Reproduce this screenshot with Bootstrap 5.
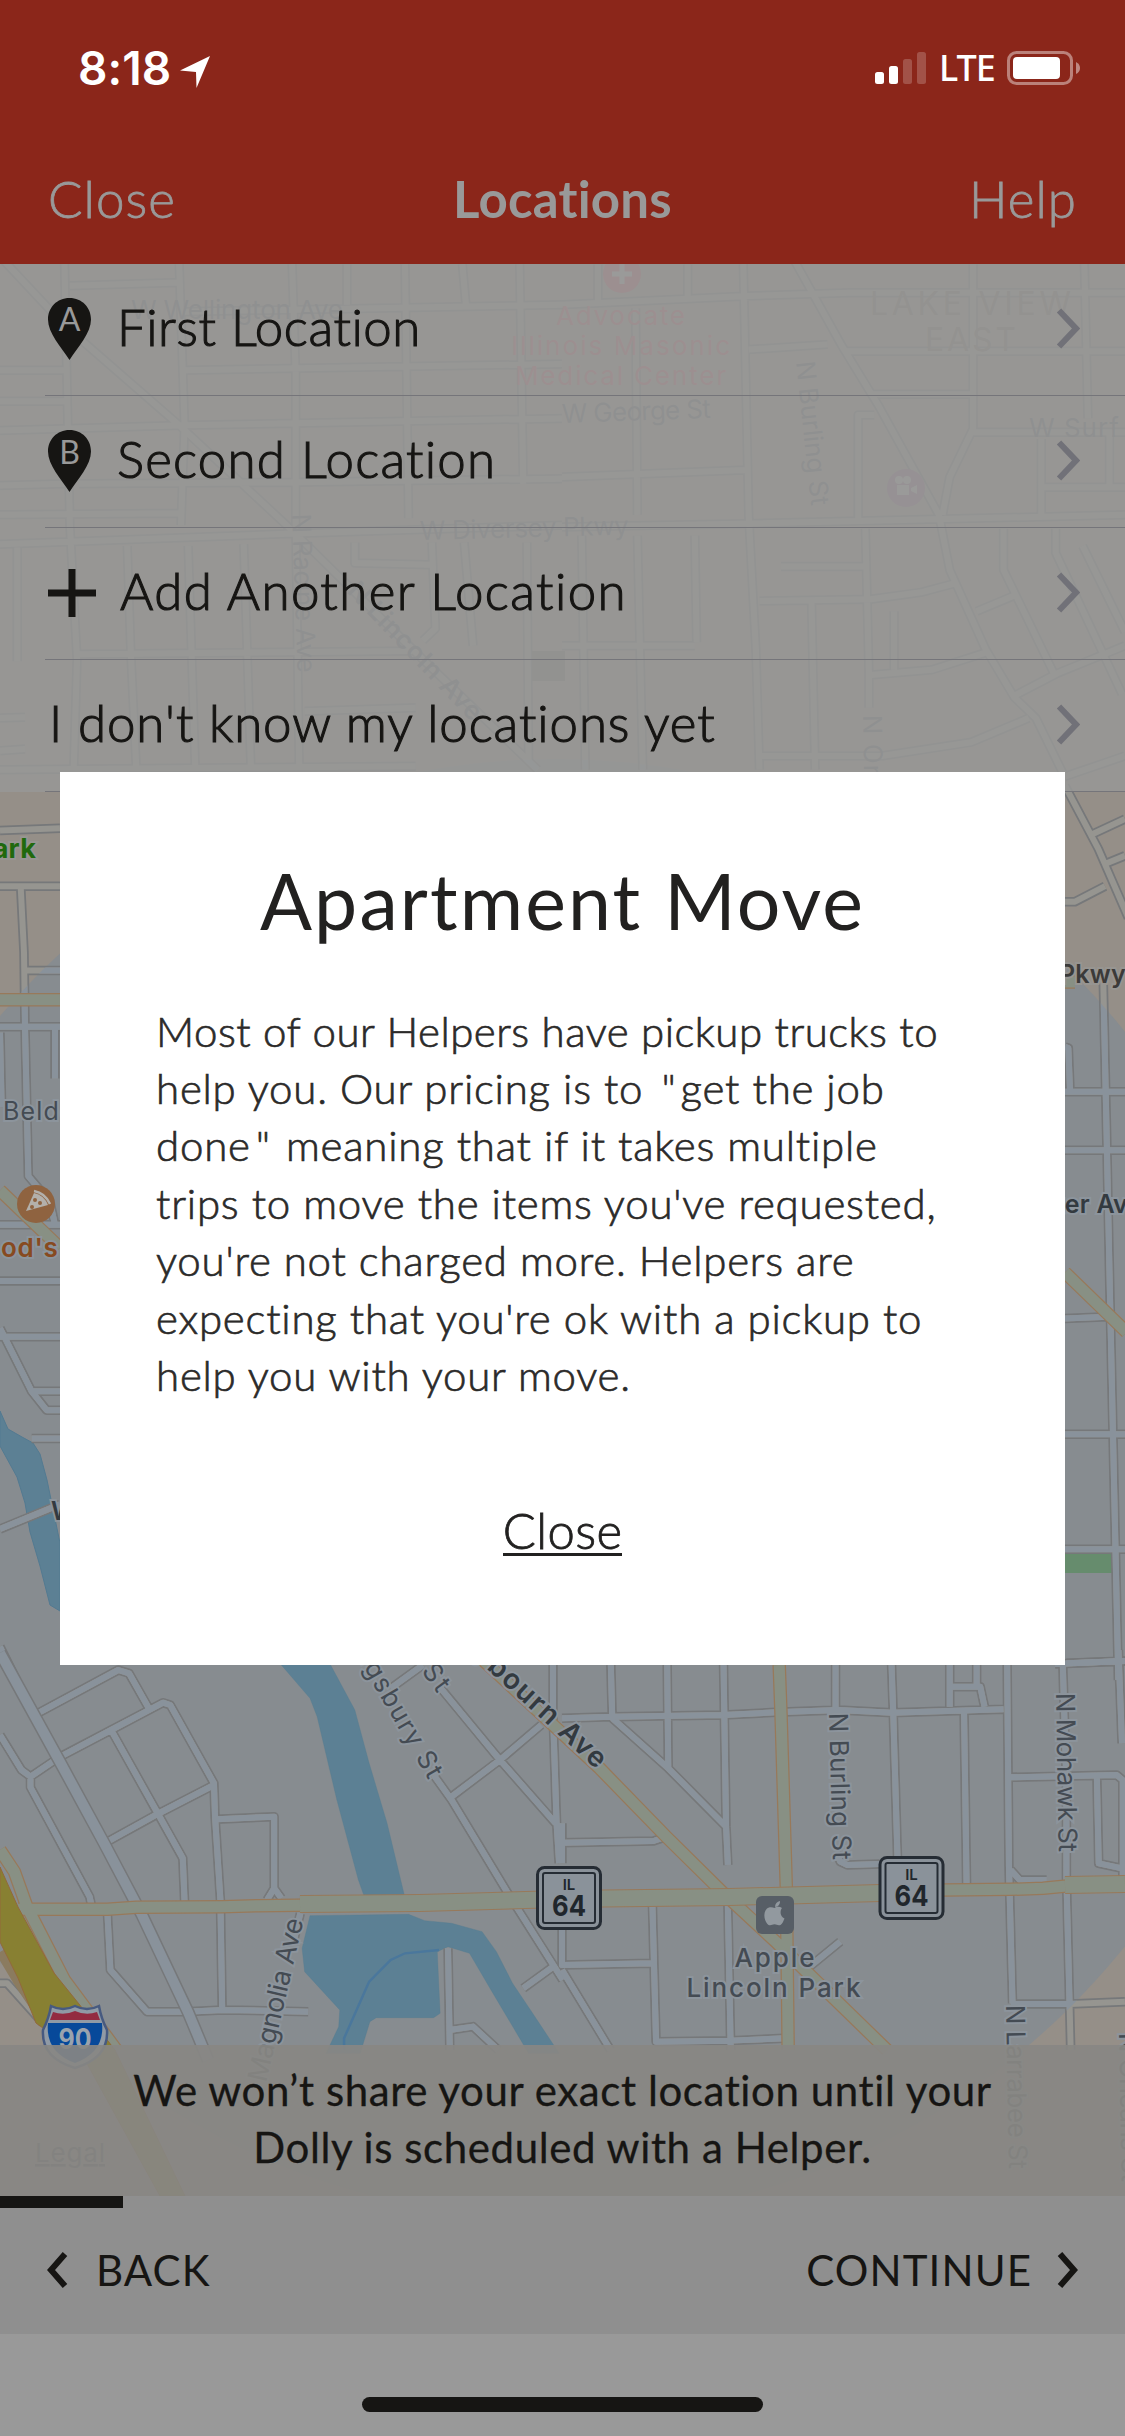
<!DOCTYPE html>
<html lang="en">
<head>
<meta charset="utf-8">
<meta name="viewport" content="width=device-width, initial-scale=1">
<title>Locations</title>
<link href="https://cdn.jsdelivr.net/npm/bootstrap@5.3.0/dist/css/bootstrap.min.css" rel="stylesheet">
<style>
body{margin:0;background:#999;font-family:Lato,"Open Sans",sans-serif;color:#161513;font-variant-ligatures:none}
.phone{width:1125px;height:2436px}
.map-canvas{left:0;top:264px;width:1125px;height:1932px;z-index:0}
.layer{z-index:1}
.topbar{height:264px;background:#8b261a;color:#999}
.status{height:136px;padding:0 44px 0 78px;font-family:Inter,sans-serif;color:#fff}
.clock{font-size:46px;font-weight:600;line-height:1;letter-spacing:.1px}
.carrier{font-family:"Noto Sans",sans-serif;font-size:36px;font-weight:500;line-height:1;letter-spacing:-.9px}
.battery{width:78px}
.navrow{height:128px;padding:0 48px 2px;font-size:51px;line-height:1.2}
.navrow a{color:#999;font-weight:300;text-decoration:none;letter-spacing:1.1px;-webkit-text-stroke:.8px #999}
.navrow h1{font-size:51px;font-weight:700;line-height:1.2;letter-spacing:.2px}
.side{width:200px}
.places{background:rgba(152,152,150,.85)}
.place{height:132px;padding:0 45px 5px 0;margin-left:45px;border-bottom:1px solid #75757a;font-size:51px;line-height:1.2;font-weight:300;letter-spacing:1.2px;-webkit-text-stroke:1.1px #161513}
.place .go{width:24px;height:41px;margin-top:3px}
.tight{letter-spacing:.55px}
.loose{letter-spacing:1.4px;padding-left:3px}
.plain{letter-spacing:.9px;padding-left:4px}
.pin-cell{width:72px;padding-left:3px}
.pin-cell svg{margin-top:4px}
.note{height:151px;padding-bottom:4px;background:rgba(136,135,131,.92);font-size:42px;line-height:57px;letter-spacing:.6px;-webkit-text-stroke:.3px #161513}
.steps{height:138px;background:#8f8f8f;font-size:42px;line-height:1;letter-spacing:1.1px}
.steps .bar{height:12px;width:123px;background:#161513}
.steps .nav-btns{height:126px;padding:0 47px 3px}
.fwd{margin-right:25px}
.homebar{height:102px;background:#999}
.homebar i{width:401px;height:15px;border-radius:8px;background:#161513;margin-top:63px}
.sheet{width:1005px;height:893px;background:#fff;border-radius:0;border:0;color:#222120}
.sheet h2{font-size:77px;line-height:92px;font-weight:400;letter-spacing:2.15px;margin:82px 0 0}
.sheet p{margin:57px 0 0 96px;font-size:42px;line-height:57.4px;font-weight:300;letter-spacing:.78px;-webkit-text-stroke:.7px #2b2a29;color:#2b2a29}
.sheet .first{letter-spacing:.5px}
.qo{margin-left:6px;margin-right:4px}
.qc{margin-left:5px;margin-right:3px}
.sheet a{color:#222120;font-size:49px;line-height:46px;font-weight:300;letter-spacing:.4px;-webkit-text-stroke:.8px #222120;border-bottom:3px solid #222120;text-decoration:none;margin-top:103px}
.roadset path{fill:none;vector-effect:non-scaling-stroke;stroke-linejoin:round}
.lbl{fill:#444b53;font-family:Inter,sans-serif;font-size:26px;letter-spacing:1px;paint-order:stroke;stroke:#8c949c;stroke-width:4px}
.veiled .lbl{fill:#5f656f;stroke:none}
.veiled .care .lbl{fill:#b3606a}
.veiled .area .lbl{fill:#77716a;font-size:32px}
</style>
<script src="https://cdn.jsdelivr.net/npm/bootstrap@5.3.0/dist/js/bootstrap.bundle.min.js"></script>
</head>
<body>
<div class="phone position-relative overflow-hidden d-flex flex-column">

<svg class="map-canvas position-absolute" viewBox="0 264 1125 1932" aria-hidden="true">
<defs>
<clipPath id="zone"><circle cx="556" cy="1489" r="730"/></clipPath>
<!-- local streets, grouped by map tile -->
<g id="streets" class="roadset">
 <g transform="matrix(.3584 0 0 .3444 0 260)">
  <path d="M180 12L195 770L215 1160L205 1500M0 -10L180 190L500 480L820 790L1180 1160L1500 1480M500 12L515 480L505 770M815 12L825 330V760L835 1480M968 12V130M1130 12L1140 750M1290 12L1300 130M1450 12L1460 650M195 75L500 65M515 150L1568 130M0 320H180M515 320L1568 302M0 410H180M0 495L515 480L1568 460M0 655L180 650M220 650L830 645L1568 635M0 740L500 735M0 825L800 795L1568 770M48 835V1165M355 830L365 1140L380 1470M525 830L545 1480M680 825L700 1470M220 1145L1150 1135M850 1310L1160 1300M990 820V880L1200 885M1205 820L1215 1070L1180 1105M1295 820L1320 1120M1470 820L1475 1460M0 1330L70 1328M0 1425L70 1420M0 1480L1160 1470"/>
 </g>
 <g transform="matrix(.359 0 0 .3444 562 260)">
  <path d="M100 12V120M350 12V110M505 12L520 740L540 1130L550 1480M640 -12L780 250L880 420L1050 740L1080 900L1180 1130L1260 1270L1320 1330L1400 1500M0 130L500 105L800 95H1568M520 260L740 245M790 265H1568M860 390H1140M1145 12V490L1080 630L1060 740M1145 500H1568M825 750V450H870M205 140L210 740M0 630L510 610M0 775L540 765L1568 740M55 800L65 1480M210 800L225 1480M370 800L375 1110M0 1120H370M610 890H840M845 780L855 1200V1300M550 990L860 985L1000 965L1090 940M860 1205L1030 1190L1180 1140M695 990L705 1480M925 1020V1190M1230 780V900L1370 1200M1375 780V850L1560 1260M1155 1020L1270 970M1260 1265L1380 1200L1568 1120M550 1440H890L1140 1400L1300 1330M1335 520V740M1455 12L1465 460M1525 500V660M1340 660H1568M1450 830L1568 1080M1400 1500L1568 1440"/>
 </g>
 <g transform="matrix(.3333 0 0 .574 0 780)">
  <path d="M0 88L180 84M0 185H180M62 185L72 300L75 430L85 690L150 735L165 775M75 332H180M0 430H180M165 430V520M0 440L5 570M0 775H180M0 873H180M0 970H180M0 955L95 1065L140 1098H180M95 1065H180M95 1147H180M0 1305L180 1262M0 1510L50 1568"/>
 </g>
 <g transform="matrix(.3333 0 0 .574 1055 780)">
  <path d="M30 10L130 120L220 240M110 95L210 68M155 145L210 132M30 212H60L150 185M145 355L155 620L165 900L190 1568M30 543H210M30 645H210M30 938L160 935M30 1140H210M30 1340H210M0 1540L210 1535M30 465L40 467L45 540"/>
 </g>
 <g transform="matrix(.3584 0 0 .3333 0 1650)">
  <path d="M0 10L165 325L290 580L395 790L525 1085L572 1200M105 190L330 60L360 70L418 180M85 380L165 322L310 240L455 158L475 165L597 400L600 500L615 750L620 1080M310 240L440 490L510 625L515 755M300 575L440 492L597 405M0 255L60 360L85 380V412L250 740L255 765M605 508L765 500V715L745 750M765 715L785 745M300 795L308 960L410 1085H520L620 1080L860 1085M1090 115L1180 45M1230 115L1395 330L1550 520M1510 225L1395 330L1260 440M1210 375L1260 450L1420 735L1570 990M1460 1015L1550 945M1543 45V190L1553 520L1560 640M1250 895L1255 1200M1255 1140L1320 1130L1390 1200M838 790L820 870M0 1000L20 1000L120 1120"/>
 </g>
 <g transform="matrix(.359 0 0 .3333 562 1650)">
  <path d="M136 45L140 205M293 45L296 355M450 45L457 530L462 645M762 45V180M918 45L923 200L935 640M1080 45V170M1155 45V110M1240 45L1245 650L1255 1060M1395 45L1405 400V680L1417 1200M1550 0L1560 280M0 205L140 200L450 195L595 187L770 180L920 188L1230 178M1080 110H1165L1177 170M140 205L296 355L457 530M0 578L255 573L290 560M1120 190L1127 705M1245 382L1545 375L1562 390V690M1490 385L1495 640L1560 655M1405 40L1568 33M1250 660L1275 690L1350 690M765 610L775 635L795 645L885 642M0 520V640M0 800V945L255 940M252 770L262 1175L470 1172L620 1165M462 765L470 1200M0 960L135 1200M690 950L775 875M1250 1062L1415 1062L1568 1055"/>
 </g>
</g>
<!-- main avenues -->
<g id="avenues" class="roadset">
 <g transform="matrix(.3333 0 0 .574 0 780)"><path d="M0 383H180M0 715L180 815"/></g>
 <g transform="matrix(.3333 0 0 .574 1055 780)"><path d="M30 858L215 962M30 352H60"/></g>
 <g transform="matrix(.3584 0 0 .3333 0 1650)"><path d="M50 778H300L380 772L620 770L720 767L1040 763L1570 750M0 600L40 665L75 770L180 990L325 1200"/></g>
 <g transform="matrix(.359 0 0 .3333 562 1650)"><path d="M605 45L610 190L625 720L630 1200M-220 30L0 250L105 355L290 560L450 730L600 880L905 1200M0 752L100 745L460 742L640 735L885 726L1065 720L1250 718L1340 715L1405 708L1568 703"/></g>
</g>
</defs>
<rect y="264" width="1125" height="1932" fill="#958f88"/>
<circle cx="556" cy="1489" r="730" fill="#878c90"/>
<rect x="1065" y="1553" width="47" height="20" fill="#668c6d"/>
<g fill="#5c8094" stroke="#537a91" stroke-width="1">
 <path d="M0 1411L8 1429L22 1437L33 1443L40 1454L47 1480L60 1543V1611L50 1605L40 1566L30 1532L25 1503L17 1477L0 1446Z"/>
 <g transform="matrix(.3584 0 0 .3333 0 1650)">
  <path d="M785 45L865 145L885 200L940 450L1000 690L1015 735H1128L1080 520L1030 340L990 180L930 60L915 30Z"/>
  <path d="M865 797L1140 793L1185 812L1260 820L1345 845L1385 905L1430 1000L1480 1080L1560 1210H1475L1370 1020L1310 910L1250 890L1220 905L1228 1090L1210 1103H1050L1032 1115L1005 1210H910L945 1130L948 1080L850 965L843 895Z"/>
  <path d="M1225 900L1130 910L1090 930L1030 995L960 1165V1200" fill="none" stroke="#4a779c" stroke-width="7"/>
 </g>
</g>
<use href="#streets" stroke="#76787a" stroke-width="9.500"/>
<use href="#streets" stroke="#969590" stroke-width="6"/>
<g clip-path="url(#zone)"><use href="#streets" stroke="#89929b" stroke-width="6"/></g>
<path d="M0 1653L60 1762L104 1843L142 1915L188 2012L208 2060" fill="none" stroke="#76787a" stroke-width="13"/>
<path d="M0 1653L60 1762L104 1843L142 1915L188 2012L208 2060" fill="none" stroke="#89929b" stroke-width="10"/>
<use href="#avenues" stroke="#98795a" stroke-width="13.500"/>
<use href="#avenues" stroke="#889084" stroke-width="11"/>
<path d="M300 1904L420 1903L562 1899L730 1897L880 1893M1065 1885L1125 1884" fill="none" stroke="#98795a" stroke-width="18"/>
<path d="M300 1904L420 1903L562 1899L730 1897L880 1893M1065 1885L1125 1884" fill="none" stroke="#889084" stroke-width="16"/>
<path d="M0 1952L18 1982L50 2030" fill="none" stroke="#8b7b5f" stroke-width="9"/>
<path d="M0 1867L18 1907L54 1973L79 2004L115 2050L185 2196H160L85 2060L54 2036L36 2023L18 1978L0 1942Z" fill="#888032" stroke="#93693a"/>

<g class="veiled">
 <text class="lbl" x="131" y="319" textLength="213">W Wellington Ave</text>
 <text class="lbl" x="562" y="423" textLength="150" transform="rotate(-2 562 423)">W George St</text>
 <text class="lbl" x="420" y="540" textLength="210" transform="rotate(-1.5 420 540)">W Diversey Pkwy</text>
 <text class="lbl" x="1029" y="437">W Surf St</text>
 <g class="care" text-anchor="middle">
  <text class="lbl" x="621" y="325" textLength="130">Advocate</text>
  <text class="lbl" x="621" y="355" textLength="220">Illinois Masonic</text>
  <text class="lbl" x="621" y="385" textLength="212">Medical Center</text>
 </g>
 <g class="area" text-anchor="middle">
  <text class="lbl" x="971" y="315" textLength="202">LAKE VIEW</text>
  <text class="lbl" x="971" y="351" textLength="92">EAST</text>
 </g>
 <text class="lbl" transform="translate(796 362) rotate(84)" textLength="146">N Burling St</text>
 <text class="lbl" transform="translate(292 514) rotate(88)" textLength="160">N Racine Ave</text>
 <text class="lbl" transform="translate(346 592) rotate(46)" textLength="182" font-weight="600">N Lincoln Ave</text>
 <text class="lbl" transform="translate(863 715) rotate(89)">N Orchard St</text>
 <circle cx="622" cy="274" r="19" fill="#b3606a"/><path d="M622 264V284M612 274H632" stroke="#aaa" stroke-width="5"/>
 <circle cx="906" cy="488" r="19" fill="#8a6a84"/><path d="M897 485h12v10h-12zM911 488l6-3v9l-6-3z" fill="#aaa"/><circle cx="899" cy="480" r="4" fill="#aaa"/><circle cx="907" cy="480" r="4" fill="#aaa"/>
 <rect x="532" y="651" width="33" height="30" fill="#74746e"/>
</g>
<g>
 <text class="lbl" x="36" y="858" text-anchor="end" style="fill:#20690d;stroke:#979591;font-weight:700;letter-spacing:.2px;font-size:27px">Park</text>
 <text class="lbl" x="3" y="1120" style="font-size:25px;letter-spacing:1.2px">Belden Ave</text>
 <text class="lbl" x="1" y="1257" style="fill:#874a20;font-weight:600;font-size:26px;letter-spacing:.7px">od's</text>
 <text class="lbl" x="51" y="1520" style="fill:#333a40;font-weight:600;font-size:25px">W</text>
 <text class="lbl" x="1059" y="983" style="fill:#3b3a39;stroke:#979591;font-weight:600;font-size:25px;letter-spacing:.2px">Pkwy</text>
 <text class="lbl" x="1056" y="1213" style="fill:#333a40;font-weight:600;font-size:25px;letter-spacing:.2px">ter Ave</text>
 <circle cx="36" cy="1204" r="19" fill="#8f6340"/>
 <path d="M26 1211L34 1193Q44 1195 48 1205Z" fill="#b3b0ab"/><path d="M34 1191Q45 1193 50 1204" fill="none" stroke="#b3b0ab" stroke-width="2.500"/>
 <g fill="#8f6340"><circle cx="35" cy="1200" r="2"/><circle cx="32" cy="1207" r="2"/><circle cx="40" cy="1203" r="2"/></g>

 <text class="lbl" transform="translate(351 1646) rotate(60)" textLength="156">ingsbury St</text>
 <text class="lbl" transform="translate(421 1671) rotate(54)" textLength="29">St</text>
 <text class="lbl" transform="translate(466 1650) rotate(42.500)" textLength="178" style="fill:#333a40;font-weight:600;font-size:28px">lybourn Ave</text>
 <text class="lbl" transform="translate(266 2083) rotate(-77)" textLength="168" style="font-size:27px">Magnolia Ave</text>
 <text class="lbl" transform="translate(829 1713) rotate(88.500)" textLength="148">N Burling St</text>
 <text class="lbl" transform="translate(1056 1693) rotate(89)" textLength="160">N Mohawk St</text>
 <text class="lbl" transform="translate(1006 2005) rotate(89)" textLength="165">N Larrabee St</text>
 <text class="lbl" transform="translate(1119 2033) rotate(89)" textLength="150">N Orleans St</text>
 <text class="lbl" x="775" y="1967" text-anchor="middle" textLength="81" style="font-weight:500">Apple</text>
 <text class="lbl" x="774" y="1997" text-anchor="middle" textLength="175" style="font-weight:500">Lincoln Park</text>
 <rect x="756" y="1896" width="38" height="38" rx="6" fill="#575e66"/>
 <path d="M782 1908c-3-2-6-1-7.500 0c-2-1-5-1.500-7.500 .5c-5 5-2 14 1.500 16.500c3 .8 3.500-.7 6-.7s3 1.500 6 .7c2-1.500 3-4 4-6.500c-5-2.500-4.500-8-2.500-10.500zM775 1907c0-3 2-5.500 5-6c.3 3-2 6-5 6z" fill="#92999f"/>
</g>
<!-- route shields -->
<g font-family="Inter, sans-serif" text-anchor="middle" fill="#20262c">
 <g><rect x="537.500" y="1867.500" width="63" height="61" rx="7" fill="#8a929a" stroke="#252c34" stroke-width="3"/><rect x="543" y="1873" width="52" height="50" rx="2" fill="none" stroke="#252c34" stroke-width="2"/><text x="569" y="1890" font-size="15" font-weight="600">IL</text><text x="569" y="1916" font-size="29" font-weight="700" textLength="34" lengthAdjust="spacingAndGlyphs">64</text></g>
 <g transform="translate(342.500 -10)"><rect x="537.500" y="1867.500" width="63" height="61" rx="7" fill="#8a929a" stroke="#252c34" stroke-width="3"/><rect x="543" y="1873" width="52" height="50" rx="2" fill="none" stroke="#252c34" stroke-width="2"/><text x="569" y="1890" font-size="15" font-weight="600">IL</text><text x="569" y="1916" font-size="29" font-weight="700" textLength="34" lengthAdjust="spacingAndGlyphs">64</text></g>
</g>
<g>
 <path d="M51 2006Q63 2012 75 2006Q87 2012 99 2006Q101 2018 107 2030Q109 2058 75 2068Q41 2058 43 2030Q49 2018 51 2006Z" fill="#909aa5" stroke="#475a80" stroke-width="2.500"/>
 <path d="M53 2012Q64 2016 75 2011Q86 2016 97 2012L100 2020H50Z" fill="#932b41"/>
 <path d="M48 2023H102Q105 2052 75 2063Q45 2052 48 2023Z" fill="#07499a"/>
 <text x="75" y="2049" text-anchor="middle" font-family="Inter, sans-serif" font-size="29" font-weight="700" textLength="33" lengthAdjust="spacingAndGlyphs" fill="#9aa3ad">90</text>
</g>
<text x="35" y="2162" font-family="Inter, sans-serif" font-size="26" textLength="70" fill="#4a5460" text-decoration="underline">Legal</text>
</svg>

<header class="topbar layer flex-shrink-0">
 <div class="status d-flex align-items-center justify-content-between">
  <div class="d-flex align-items-center gap-2">
   <span class="clock">8:18</span>
   <svg width="32" height="34" viewBox="0 0 32 34" class="mt-2"><path d="M31 1L17.500 33L17 17L1 15.500Z" fill="#fff"/></svg>
  </div>
  <div class="d-flex align-items-center">
   <svg width="52" height="34" viewBox="0 0 52 34"><g fill="#fff"><rect y="21" width="9" height="12" rx="2.500"/><rect x="14" y="15" width="9" height="18" rx="2.500"/><g opacity=".2"><rect x="28" y="8" width="9" height="25" rx="2.500"/><rect x="42" y="1" width="9" height="32" rx="2.500"/></g></g></svg>
   <span class="carrier ms-2 ps-1">LTE</span>
   <svg height="34" viewBox="0 0 74 34" class="battery ms-2 ps-1 flex-shrink-0"><rect x="1.500" y="1.500" width="63" height="31" rx="8" fill="none" stroke="#fff" stroke-opacity=".42" stroke-width="3"/><rect x="6" y="6" width="47" height="22" rx="4" fill="#fff"/><path d="M69 11Q73 13 73 17T69 23Z" fill="#fff" fill-opacity=".45"/></svg>
  </div>
 </div>
 <nav class="navrow d-flex align-items-center justify-content-between">
  <a class="side" href="#">Close</a>
  <h1 class="mb-0">Locations</h1>
  <a class="side text-end" href="#">Help</a>
 </nav>
</header>

<main class="places layer flex-shrink-0">
 <div class="place d-flex align-items-center">
  <span class="pin-cell"><svg class="d-block" width="43" height="62" viewBox="0 0 43 62"><path d="M21.500 0C9 0 0 9.500 0 21.500C0 35 13 49 21.500 62C30 49 43 35 43 21.500C43 9.500 34 0 21.500 0Z" fill="#161513"/><text x="21.500" y="33" text-anchor="middle" font-size="32" font-weight="400" letter-spacing="0" stroke="none" fill="#999">A</text></svg></span>
  <span class="flex-grow-1 tight">First Location</span>
  <svg class="go" viewBox="0 0 24 41"><path d="M3 2.500L20 20.500L3 38.500" fill="none" stroke="#717178" stroke-width="6"/></svg>
 </div>
 <div class="place d-flex align-items-center">
  <span class="pin-cell"><svg class="d-block" width="43" height="62" viewBox="0 0 43 62"><path d="M21.500 0C9 0 0 9.500 0 21.500C0 35 13 49 21.500 62C30 49 43 35 43 21.500C43 9.500 34 0 21.500 0Z" fill="#161513"/><text x="21.500" y="34" text-anchor="middle" font-size="32" font-weight="400" letter-spacing="0" stroke="none" fill="#999">B</text></svg></span>
  <span class="flex-grow-1">Second Location</span>
  <svg class="go" viewBox="0 0 24 41"><path d="M3 2.500L20 20.500L3 38.500" fill="none" stroke="#717178" stroke-width="6"/></svg>
 </div>
 <div class="place d-flex align-items-center">
  <span class="pin-cell"><svg class="d-block" width="48" height="48" viewBox="0 0 48 48"><path d="M24 0V48M0 24H48" stroke="#161513" stroke-width="7"/></svg></span>
  <span class="flex-grow-1 loose">Add Another Location</span>
  <svg class="go" viewBox="0 0 24 41"><path d="M3 2.500L20 20.500L3 38.500" fill="none" stroke="#717178" stroke-width="6"/></svg>
 </div>
 <div class="place d-flex align-items-center">
  <span class="flex-grow-1 plain">I don't know my locations yet</span>
  <svg class="go" viewBox="0 0 24 41"><path d="M3 2.500L20 20.500L3 38.500" fill="none" stroke="#717178" stroke-width="6"/></svg>
 </div>
</main>

<div class="flex-grow-1"></div>

<div class="note layer flex-shrink-0 text-center d-flex align-items-center justify-content-center">
 <div>We won’t share your exact location until your<br>Dolly is scheduled with a Helper.</div>
</div>
<footer class="steps layer flex-shrink-0">
 <div class="bar"></div>
 <div class="nav-btns d-flex align-items-center justify-content-between">
  <div class="d-flex align-items-center"><svg width="21" height="36" viewBox="0 0 21 36" class="me-4"><path d="M18 2L4 18L18 34" fill="none" stroke="#161513" stroke-width="6"/></svg><span class="ms-1">BACK</span></div>
  <div class="d-flex align-items-center"><span class="fwd">CONTINUE</span><svg width="21" height="36" viewBox="0 0 21 36"><path d="M3 2L17 18L3 34" fill="none" stroke="#161513" stroke-width="6"/></svg></div>
 </div>
</footer>
<div class="homebar layer flex-shrink-0 d-flex justify-content-center"><i></i></div>

<div class="position-absolute top-0 start-0 w-100 h-100 d-flex align-items-center justify-content-center z-3">
 <div class="sheet card" role="dialog" aria-labelledby="dlg">
  <h2 id="dlg" class="text-center">Apartment Move</h2>
  <p><span class="first">Most of our Helpers have pickup trucks to</span><br>help you. Our pricing is to <span class="qo">"</span>get the job<br>done<span class="qc">"</span> meaning that if it takes multiple<br>trips to move the items you've requested,<br>you're not charged more. Helpers are<br>expecting that you're ok with a pickup to<br>help you with your move.</p>
  <a href="#" class="align-self-center">Close</a>
 </div>
</div>
</div>
</body>
</html>
